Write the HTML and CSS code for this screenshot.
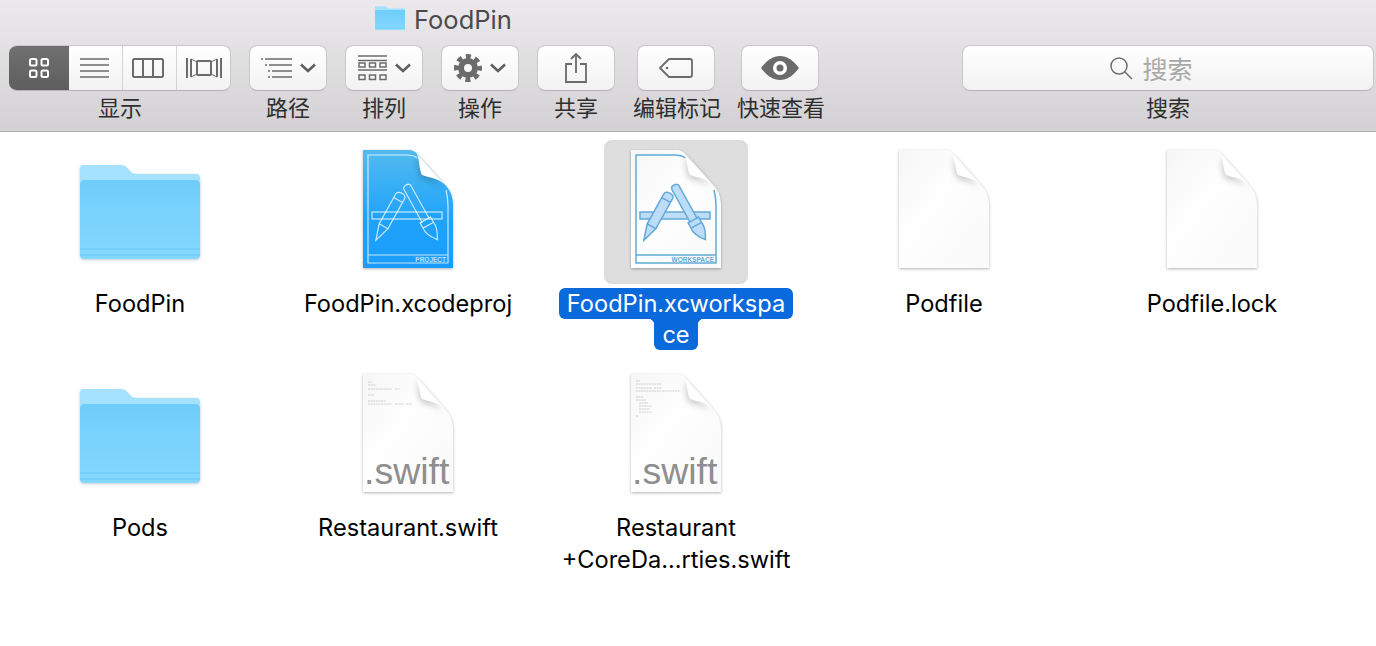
FILE: index.html
```html
<!DOCTYPE HTML>
<html>
<head>
<meta http-equiv="Content-Type" content="text/html; charset=utf-8">
<title>FoodPin</title>
<link rel="stylesheet" href="styles.css">
</head>
<body>
<!-- shared shapes -->
<svg class="defs" width="0" height="0">
	<defs>
		<linearGradient id="folderFront" x1="0" y1="0" x2="0" y2="1">
			<stop offset="0" stop-color="#6fcdf9"></stop>
			<stop offset="1" stop-color="#84d8ff"></stop>
		</linearGradient>
		<linearGradient id="blueDoc" x1="0" y1="0" x2="0" y2="1">
			<stop offset="0" stop-color="#52bbef"></stop>
			<stop offset=".6" stop-color="#1fa2fa"></stop>
			<stop offset="1" stop-color="#1a9dfd"></stop>
		</linearGradient>
		<linearGradient id="whiteDoc" x1="0" y1="0" x2="1" y2="1">
			<stop offset="0" stop-color="#f6f6f6"></stop>
			<stop offset=".4" stop-color="#fefefe"></stop>
			<stop offset="1" stop-color="#fafafa"></stop>
		</linearGradient>
		<g id="folder">
			<path fill="#a5e2ff" d="M16 25H52C56 25 58 26 60 29L63 32C64 33 65 34 68 34H128C131 34 132 36 132 39V60H12V29C12 26 13 25 16 25Z"></path>
			<path fill="url(#folderFront)" d="M17 40H127C130 40 132 42 132 45V115C132 118 130 119 128 119H16C14 119 12 118 12 115V45C12 42 14 40 17 40Z"></path>
			<path fill="#69c6f1" opacity=".45" d="M12 108H132V110H12ZM12 114H132V116H12Z"></path>
		</g>
		<path id="page" d="M27 10H72C77 10 80 12 82 15L111 47C115 52 117 58 117 66V128H27Z"></path>
		<path id="fold" d="M81 14C84 22 83 30 86 35C94 38 104 38 111 47Z"></path>
		<g id="app">
			<path class="app-frame" d="M110 50C111 54 112 60 112 66V123H32V15H70C75 15 79 16 81 18M32 115H112"></path>
			<rect class="app-part" x="36" y="72" width="70" height="7"></rect>
			<g transform="translate(66 53) rotate(29)">
				<path class="app-part" d="M-5 4C-5 -1 5 -1 5 4V38L0 54L-5 38Z"></path>
				<path class="app-frame" d="M-5 8H5M-5 38H5"></path>
			</g>
			<g transform="translate(70 45) rotate(-29)">
				<path class="app-part" d="M-4 3C-4 -1 4 -1 4 3V40H6V46C7 52 4 58 1 63C-3 58 -7 52 -6 46V40H-4Z"></path>
				<path class="app-frame" d="M-6 40H6M-6 46H6"></path>
			</g>
		</g>
	</defs>
</svg>

<header class="toolbar">
	<div class="title-row">
		<svg class="title-icon" viewBox="12 25 120 94"><use href="#folder"></use></svg>
		<span class="title-text">FoodPin</span>
	</div>
	<div class="tool-row">
		<div class="tool">
			<div class="seg">
				<div class="seg-item seg-active seg-first">
					<svg width="20" height="20" viewBox="0 0 20 20" fill="none" stroke="#fff" stroke-width="2"><rect x="1" y="1" width="6.500" height="6.500" rx="1.500"></rect><rect x="12.500" y="1" width="6.500" height="6.500" rx="1.500"></rect><rect x="1" y="12.500" width="6.500" height="6.500" rx="1.500"></rect><rect x="12.500" y="12.500" width="6.500" height="6.500" rx="1.500"></rect></svg>
				</div>
				<div class="seg-item seg-list">
					<svg width="29" height="20" viewBox="0 0 29 20" fill="none" stroke="#6b6b6b" stroke-width="1.500"><path d="M0 1H29M0 7H29M0 13H29M0 19H29"></path></svg>
				</div>
				<div class="seg-item seg-cols">
					<svg width="32" height="20" viewBox="0 0 32 20" fill="none" stroke="#6b6b6b" stroke-width="2"><rect x="1" y="1" width="30" height="18" rx="1.500"></rect><path d="M11 1V19M21 1V19"></path></svg>
				</div>
				<div class="seg-item seg-last">
					<svg width="36" height="22" viewBox="0 0 36 22" fill="none" stroke="#6b6b6b" stroke-width="2"><rect x="11" y="4" width="14" height="14" rx="1"></rect><path d="M1 1V21M5 2V20M31 2V20M35 1V21"></path><path stroke-width="1" d="M5 2L11 5M5 20L11 17M31 2L25 5M31 20L25 17"></path></svg>
				</div>
			</div>
			<span class="tool-label">显示</span>
		</div>
		<div class="tool">
			<div class="btn">
				<svg width="31" height="20" viewBox="0 0 31 20" fill="none" stroke="#6b6b6b" stroke-width="1.500"><path d="M0 1H2M4 1H31M4 7H6M8 7H31M7 13H9M11 13H31M7 19H9M11 19H31"></path></svg>
				<svg class="chev" width="16" height="10" viewBox="0 0 16 10"><path d="M1 1.500L8 8L15 1.500"></path></svg>
			</div>
			<span class="tool-label">路径</span>
		</div>
		<div class="tool">
			<div class="btn">
				<svg width="29" height="26" viewBox="0 0 29 26" fill="none" stroke="#6b6b6b" stroke-width="1.500"><path d="M0 1H29M0 5.500H29M0 15H29"></path><path d="M1 8H7V12H1ZM11.500 8H17.500V12H11.500ZM22 8H28V12H22ZM1 20H7V24.500H1ZM11.500 20H17.500V24.500H11.500ZM22 20H28V24.500H22Z"></path></svg>
				<svg class="chev" width="16" height="10" viewBox="0 0 16 10"><path d="M1 1.500L8 8L15 1.500"></path></svg>
			</div>
			<span class="tool-label">排列</span>
		</div>
		<div class="tool">
			<div class="btn">
				<svg width="28" height="28" viewBox="-14 -14 28 28" fill="none" stroke="#6b6b6b"><circle r="7" stroke-width="6"></circle><circle r="11.500" stroke-width="5" stroke-dasharray="5 4.032" stroke-dashoffset="2.500"></circle></svg>
				<svg class="chev" width="16" height="10" viewBox="0 0 16 10"><path d="M1 1.500L8 8L15 1.500"></path></svg>
			</div>
			<span class="tool-label">操作</span>
		</div>
		<div class="tool">
			<div class="btn">
				<svg width="22" height="30" viewBox="0 0 22 30" fill="none" stroke="#6b6b6b" stroke-width="1.800"><path d="M7 11H1V29H21V11H15"></path><path d="M11 20V1M6 6L11 1L16 6"></path></svg>
			</div>
			<span class="tool-label">共享</span>
		</div>
		<div class="tool tool-tag">
			<div class="btn">
				<svg width="34" height="20" viewBox="0 0 34 20" fill="none" stroke="#6b6b6b" stroke-width="1.800"><path d="M10 1H31C32 1 33 2 33 3V17C33 18 32 19 31 19H10L1 10Z" stroke-linejoin="round"></path><circle cx="8" cy="10" r="1.300" fill="#6b6b6b" stroke="none"></circle></svg>
			</div>
			<span class="tool-label">编辑标记</span>
		</div>
		<div class="tool tool-eye">
			<div class="btn">
				<svg width="38" height="24" viewBox="0 0 38 24"><path fill="#6b6b6b" d="M0 12C6 4 12 0 19 0C26 0 32 4 38 12C32 20 26 24 19 24C12 24 6 20 0 12Z"></path><circle cx="19" cy="12" r="7" fill="#fff"></circle><circle cx="19" cy="12" r="3.500" fill="#6b6b6b"></circle></svg>
			</div>
			<span class="tool-label">快速查看</span>
		</div>
		<div class="tool tool-search">
			<div class="search-box">
				<svg width="24" height="24" viewBox="0 0 24 24" fill="none" stroke="#6e6e6e" stroke-width="1.500"><circle cx="10" cy="10" r="8"></circle><path d="M16 16L23 23"></path></svg>
				<span class="search-hint">搜索</span>
			</div>
			<span class="tool-label">搜索</span>
		</div>
	</div>
</header>

<main class="files">
	<div class="file">
		<div class="thumb"><svg viewBox="0 0 144 144"><use class="folder" href="#folder"></use></svg></div>
		<div class="name">FoodPin</div>
	</div>
	<div class="file">
		<div class="thumb doc-project">
			<svg viewBox="0 0 144 144">
				<use class="page" href="#page"></use>
				<use href="#app"></use>
				<text class="badge" x="110" y="122">PROJECT</text>
				<use class="fold" href="#fold"></use>
			</svg>
		</div>
		<div class="name">FoodPin.xcodeproj</div>
	</div>
	<div class="file file-selected">
		<div class="thumb doc-workspace">
			<svg viewBox="0 0 144 144">
				<use class="page" href="#page"></use>
				<use href="#app"></use>
				<text class="badge" x="110" y="122">WORKSPACE</text>
				<use class="fold" href="#fold"></use>
			</svg>
		</div>
		<div class="name">
			<span class="name-line name-first">FoodPin.xcworkspa</span>
			<span class="name-line name-rest">ce</span>
		</div>
	</div>
	<div class="file">
		<div class="thumb doc-plain">
			<svg viewBox="0 0 144 144"><use class="page" href="#page"></use><use class="fold" href="#fold"></use></svg>
		</div>
		<div class="name">Podfile</div>
	</div>
	<div class="file">
		<div class="thumb doc-plain">
			<svg viewBox="0 0 144 144"><use class="page" href="#page"></use><use class="fold" href="#fold"></use></svg>
		</div>
		<div class="name">Podfile.lock</div>
	</div>
	<div class="file">
		<div class="thumb"><svg viewBox="0 0 144 144"><use class="folder" href="#folder"></use></svg></div>
		<div class="name">Pods</div>
	</div>
	<div class="file">
		<div class="thumb doc-plain">
			<svg viewBox="0 0 144 144">
				<use class="page" href="#page"></use>
				<path class="code" d="M32 18H36M32 21H40M32 25H56M59 25H64M32 31H38M32 37H50M32 40H56M59 40H68M70 40H76"></path>
				<text class="ext" x="28" y="120">.swift</text>
				<use class="fold" href="#fold"></use>
			</svg>
		</div>
		<div class="name">Restaurant.swift</div>
	</div>
	<div class="file">
		<div class="thumb doc-plain">
			<svg viewBox="0 0 144 144">
				<use class="page" href="#page"></use>
				<path class="code" d="M32 17H36M32 20H58M32 24H48M50 24H58M32 27H76M32 33H40M32 36H42M35 39H44M35 42H48M35 45H46M35 48H48M32 52H34"></path>
				<text class="ext" x="28" y="120">.swift</text>
				<use class="fold" href="#fold"></use>
			</svg>
		</div>
		<div class="name">Restaurant<br>+CoreDa...rties.swift</div>
	</div>
</main>
</body>
</html>
```
FILE: styles.css
```css
html, body { margin: 0; padding: 0; }
body { width: 1376px; height: 646px; overflow: hidden; background: #fff; font-family: Inter, "Liberation Sans", "Noto Sans CJK SC", sans-serif; }
svg { display: block; }
.defs { position: absolute; }

/* toolbar */
.toolbar { height: 131px; border-bottom: 1px solid #b0aeb0; background: linear-gradient(#ebe9eb, #d3d1d3); }
.title-row { height: 45px; padding: 0 0 9px 375px; box-sizing: border-box; display: flex; align-items: center; gap: 9px; }
.title-icon { width: 30px; height: 24px; }
.title-text { padding-top: 2px; font-size: 25.500px; color: #4b4a4b; }
.tool-row { display: flex; gap: 18px; padding: 0 2px 0 9px; }
.tool { display: flex; flex-direction: column; align-items: center; width: 78px; }
.tool-label { margin-top: -1px; line-height: 32px; font-size: 22px; white-space: nowrap; color: #2e2e2e; font-family: "Noto Sans CJK SC", sans-serif; }
.tool:first-child { width: 222px; }
.tool-tag { margin-left: 4px; }
.tool-eye { margin-left: 8px; }
.tool-tag .tool-label, .tool-eye .tool-label { padding-left: 2px; }
.tool-search { width: 412px; margin-left: auto; }

.btn, .seg, .search-box { height: 46px; box-sizing: border-box; border: 1px solid #c9c7c9; border-bottom-color: #b5b3b5; border-radius: 8px; background: linear-gradient(#fff, #f2f2f2); }
.btn { width: 78px; display: flex; align-items: center; justify-content: center; gap: 8px; }
.chev { fill: none; stroke: #5e5e5e; stroke-width: 2.500; }

.seg { width: 222px; display: flex; overflow: hidden; border-left: 0; }
.seg-item { width: 54px; display: flex; align-items: center; justify-content: center; border-left: 1px solid #d4d2d4; box-sizing: border-box; }
.seg-first { width: 60px; border-left: 0; }
.seg-list { width: 53px; border-left: 0; padding-right: 3px; }
.seg-cols { padding-right: 4px; }
.seg-last { flex: 1; }
.seg-active { background: linear-gradient(#707070, #5e5e5e); }

.search-box { width: 412px; padding-right: 34px; display: flex; align-items: center; justify-content: center; gap: 9px; }
.search-hint { font-size: 25px; color: #a8a8a8; font-family: "Noto Sans CJK SC", sans-serif; }

/* file grid */
.files { padding: 8px 0 0 6px; display: grid; grid-template-columns: repeat(5, 268px); grid-auto-rows: 224px; }
.file { display: flex; flex-direction: column; align-items: center; }
.thumb { width: 144px; height: 144px; border-radius: 8px; }
.thumb svg { width: 144px; height: 144px; overflow: visible; }
.file-selected .thumb { background: #dedede; }
.name { margin-top: 4px; width: 268px; text-align: center; font-size: 23.600px; line-height: 32px; color: #000; }
.name-line { display: table; margin: 0 auto; padding: 0 8px; line-height: 31px; background: #0a69db; color: #fff; position: relative; }
.name-first { border-radius: 6px; }
.name-rest { border-radius: 0 0 6px 6px; }
.name-rest::before, .name-rest::after { content: ""; position: absolute; top: 0; width: 6px; height: 6px; }
.name-rest::before { left: -6px; background: radial-gradient(circle at 0 100%, transparent 6px, #0a69db 6.500px); }
.name-rest::after { right: -6px; background: radial-gradient(circle at 100% 100%, transparent 6px, #0a69db 6.500px); }

/* icons */
.folder { filter: drop-shadow(0 1px 1.500px rgba(0, 60, 110, .25)); }
.page { fill: url(#whiteDoc); filter: drop-shadow(0 1px 1.500px rgba(0, 0, 0, .3)); }
.fold { fill: #fff; filter: drop-shadow(-1px 3px 3px rgba(0, 0, 0, .22)); }
.doc-project .page { fill: url(#blueDoc); }
.app-frame { fill: none; stroke: var(--app-line); stroke-width: var(--app-width); }
.app-part { fill: var(--app-fill); stroke: var(--app-line); stroke-width: var(--app-width); }
.doc-project { --app-line: rgba(255, 255, 255, .75); --app-fill: none; --app-width: 1.200; --badge: rgba(255, 255, 255, .7); }
.doc-workspace { --app-line: #62aad8; --app-fill: #bcdcf7; --app-width: 1.500; --badge: #62aad8; }
.badge { font: bold 6.500px "Liberation Sans", sans-serif; text-anchor: end; fill: var(--badge); }
.code { fill: none; stroke: #c4c4c4; stroke-width: .8; stroke-dasharray: 2 .6; }
.ext { font: 37.500px "Liberation Sans", sans-serif; fill: #8e8e8e; }
```
